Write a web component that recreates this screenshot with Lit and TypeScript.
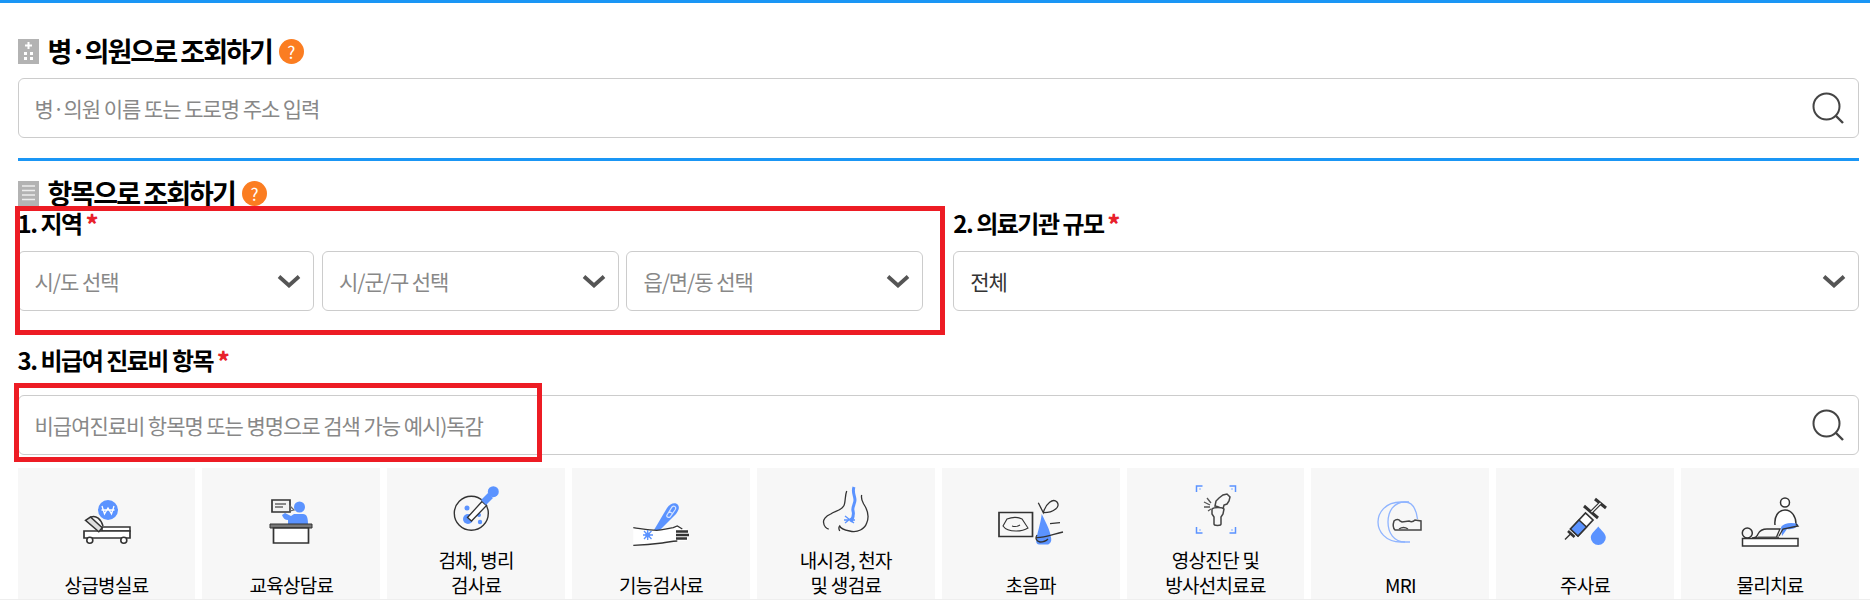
import { LitElement, html, css, svg } from "lit";
import { customElement } from "lit/decorators.js";

const BLUE = "#5b93ff";
const INK = "#333";

// all icons share a 64x64 box centred in the free part of the card
const ICONS = [
  svg`<circle cx="33" cy="21" r="10" fill="${BLUE}"/>
    <path d="M27 17l2.500 8 3.500-6 3.500 6 2.500-8M26.500 21h13" fill="none" stroke="#fff" stroke-width="1.300"/>
    <path d="M27 38h28v4H27z" fill="#fff" stroke="${INK}" stroke-width="1.500"/>
    <path d="M9 42h46v7H9z" fill="#fff" stroke="${INK}" stroke-width="1.700"/>
    <path d="M10.500 31.300l5-3.300 11.700 10.700-3.400 4z" fill="#ddd" stroke="${INK}" stroke-width="1.500"/>
    <path d="M16 28c5-2 10 2 12 9" fill="none" stroke="${INK}" stroke-width="1.500"/>
    <circle cx="14.800" cy="51.300" r="3" fill="#fff" stroke="${INK}" stroke-width="1.600"/>
    <circle cx="48.800" cy="51.300" r="3" fill="#fff" stroke="${INK}" stroke-width="1.600"/>`,
  svg`<path d="M13 11h18v12H13z" fill="#f2f2f2" stroke="${INK}" stroke-width="1.700"/>
    <path d="M31 17l4 4-4 1zM16 15h11M16 18h8" fill="none" stroke="#666" stroke-width="1.300"/>
    <circle cx="40.500" cy="18" r="5.500" fill="${BLUE}"/>
    <path d="M23 26l3-2 6 3 3-2h9c4 0 5 4 5 10H29v-4c-3 0-5-2-6-5z" fill="${BLUE}"/>
    <path d="M11 35h42v4H11z" fill="#777" stroke="${INK}" stroke-width="1"/>
    <path d="M14.500 39h35v15h-35z" fill="#fff" stroke="${INK}" stroke-width="1.700"/>`,
  svg`<circle cx="27.300" cy="37.300" r="17" fill="#f7f7f7" stroke="${INK}" stroke-width="1.400"/>
    <circle cx="24" cy="43" r="5" fill="${BLUE}"/><circle cx="23" cy="32" r="2.500" fill="${BLUE}"/>
    <circle cx="36" cy="46" r="2.200" fill="${BLUE}"/><circle cx="35" cy="39" r="2" fill="${BLUE}"/>
    <path d="M23.500 41.500l14.500-16 4.500 4-15 15.500z" fill="#fff" stroke="${INK}" stroke-width="1.300"/>
    <path d="M37 24l7-7 5 5-7 7z" fill="${BLUE}"/><circle cx="49.300" cy="15.700" r="5.500" fill="${BLUE}"/>`,
  svg`<path d="M25 41l13-22c3-5 9-6 11-3s0 6-2 9L31 41z" fill="${BLUE}"/>
    <path d="M38 26l5-8c2-2 5 0 3 3l-5 7c-1 1-4 0-3-2zM40 22l4 3" fill="none" stroke="#d5e3ff" stroke-width="1.200"/>
    <path d="M4.300 38.700c8 1 16 2.600 23.400 2.600 6 0 11-2 16.600-2.600l4-1.700 5 3h4c3 3 3 10 0 12h-9c-5 0-8 1-15 2-8 1-20 2-29 2.300z" fill="#fff"/>
    <path d="M4.300 38.700c8 1 16 2.600 23.400 2.600 6 0 11-2 16.600-2.600l4-1.700 5 3M4.300 56.300c9-.3 21-1.300 29-2.300 7-1 10-2 15-2" fill="none" stroke="${INK}" stroke-width="1.300"/>
    <path d="M47 42.500h12M47 46h13M47 49.500h11" stroke="${INK}" stroke-width="2.400"/>
    <path d="M15 42l7.500 8M22.500 42l-7.500 8M14 46h10M18.700 41v10" stroke="${BLUE}" stroke-width="1.300"/>
    <circle cx="18.700" cy="46" r="2.500" fill="${BLUE}"/>`,
  svg`<path d="M32.700 15c-2 5-1 12-3 15-3 5-9 5-13 8-5 2-8 6-7 9 0 3 3 6 5 6M47.700 19c-1 4 1 7 2 9 4 6 6 12 3 19-2 6-9 10-17 8-5-1-9-2-10-5-1 1-1 3 0 5" fill="none" stroke="${INK}" stroke-width="1.300"/>
    <path d="M40 11c-2 5 1 9 1 13s-3 7-2 11c1 3 0 7-2 11" fill="none" stroke="${BLUE}" stroke-width="3"/>
    <path d="M31 40l9 7M31 47l9-7M30 44h11" stroke="${BLUE}" stroke-width="1.300"/>`,
  svg`<path d="M0 23.500h33.500v24H0z" fill="#f7f7f7" stroke="${INK}" stroke-width="1.700"/>
    <path d="M8 30c5-2 11-2 15 0l6 9c-3 2-6 3-12 3s-11-2-13-5z" fill="none" stroke="${INK}" stroke-width="1.100"/>
    <path d="M13 37c3 1 5 1 8-1" fill="none" stroke="${INK}" stroke-width="1.100"/>
    <path d="M42.700 25c-1 10-5 20-5.500 27 0 2 1 3.500 3 3.500h9c2-1 3.500-3 3-6-1-9-6-17-9.500-24.500z" fill="${BLUE}"/>
    <path d="M39.300 13.700l5 10C47 14 54 9 58 13c4 5-4 11-13.700 10.700M51 34.700l10-1M37.700 48.700C44 49 52 46 64 43M38 46c-2 3-1 6 3 7 4 0 6-1 8-3" fill="none" stroke="${INK}" stroke-width="1.300"/>`,
  svg`<path d="M12.500 16v-6h6M45.500 10h6v6M12.500 51v6h6M45.500 57h6v-6" fill="none" stroke="${BLUE}" stroke-width="1.500"/>
    <path d="M15 13h2M49 13h-2M15 54h2M49 54h-2" stroke="#bcd2ff" stroke-width="2"/>
    <path d="M31 30l1-5 3-3 4-3 4-1 3 3-1 4-2 3-3 1-1 4c-3-1-5-3-8-3z" fill="#f7f7f7" stroke="#444" stroke-width="1.500"/>
    <path d="M28 33c2-2 10-2 12 0l-1 5-2 3v7c0 2-7 2-7 0v-7l-2-3z" fill="#f7f7f7" stroke="#444" stroke-width="1.500"/>
    <path d="M20 26l6 3M20 31l6 0M23 22l4 5M24 35l3-2" stroke="#555" stroke-width="1.300"/>`,
  svg`<path d="M41 13H33C17 13 10 24 10 33s7 20 23 20h9" fill="none" stroke="#8fb4ff" stroke-width="1.300"/>
    <path d="M37 13c-11 0-17 9-17 20s6 20 17 20M37 13c7 0 11 6 12.500 17" fill="none" stroke="#8fb4ff" stroke-width="1.300"/>
    <path d="M26 32c2-2 5-2 6 0l2 1 7-1c2 1 4 1 6-1l6 1v9H27c-2-2-2-6-1-9z" fill="#f7f7f7" stroke="#444" stroke-width="1.500"/>
    <path d="M31 40c3-2 6-2 9 0" fill="none" stroke="#444" stroke-width="1.300"/>`,
  svg`<path d="M12 50.500l6-6" stroke="${INK}" stroke-width="1.500"/>
    <path d="M17.500 40l15-16 7.500 7-15 16z" fill="#fff" stroke="${INK}" stroke-width="1.700"/>
    <path d="M17.500 40l8.500-9 7.500 7-8.500 9z" fill="${BLUE}" stroke="${INK}" stroke-width="1.500"/>
    <path d="M15 42l6.500 6" stroke="${INK}" stroke-width="2.600"/>
    <path d="M31 17l14 12M42 10l11 9" fill="none" stroke="${INK}" stroke-width="3"/>
    <path d="M38.500 23l9-9" fill="none" stroke="${INK}" stroke-width="3.500"/>
    <path d="M38.500 23l9-9" fill="none" stroke="#fff" stroke-width="1.200"/>
    <path d="M45.300 37.500c3 4 7.500 7 7.500 11a7.500 7.500 0 0 1-15 0c0-4 4.500-7 7.500-11z" fill="${BLUE}"/>`,
  svg`<circle cx="47" cy="13.500" r="4.500" fill="#fff" stroke="${INK}" stroke-width="1.500"/>
    <path d="M37 36c-1-8 3-15 10-15s11 7 11 14" fill="#fff" stroke="${INK}" stroke-width="1.500"/>
    <path d="M43 38c3-4 10-5 17-3 0 3-5 6-11 5l-5 7z" fill="${BLUE}"/>
    <path d="M58 35l2 2-15 3-4 7" fill="none" stroke="${INK}" stroke-width="1.300"/>
    <circle cx="9.300" cy="44" r="5" fill="#f7f7f7" stroke="${INK}" stroke-width="1.500"/>
    <path d="M14 49c3 0 5-1 6-4 2-4 5-5 9-5h13l-4 9z" fill="#f7f7f7" stroke="${INK}" stroke-width="1.300"/>
    <path d="M20 47.500h21v2H20z" fill="#555"/>
    <path d="M4.500 49.500h55.500v7.500H4.500z" fill="#fff" stroke="${INK}" stroke-width="1.500"/>`,
];

const ITEMS = [
  ["상급병실료"],
  ["교육상담료"],
  ["검체, 병리", "검사료"],
  ["기능검사료"],
  ["내시경, 천자", "및 생검료"],
  ["초음파"],
  ["영상진단 및", "방사선치료료"],
  ["MRI"],
  ["주사료"],
  ["물리치료"],
];

@customElement("app-root")
export class AppRoot extends LitElement {
  static styles = css`
    :host {
      display: block;
      height: 608px;
      overflow: hidden;
      background: #fff;
      font-family: "Noto Sans CJK KR", "Noto Sans", sans-serif;
      color: #000;
    }
    .page {
      height: 596px;
      overflow: hidden;
      border-top: 3px solid #1a96f5;
      padding: 0 11px 0 17.6px;
    }
    .title {
      display: flex;
      align-items: center;
      height: 34px;
      line-height: 34px;
      font-size: 27px;
      font-weight: 700;
      letter-spacing: -1.95px;
    }
    .title.first {
      margin-top: 31px;
    }
    .title.second {
      margin-top: 15px;
    }
    .title-icon {
      width: 21px;
      height: 25px;
      margin-right: 9px;
      flex: none;
    }
    .help {
      display: flex;
      align-items: center;
      justify-content: center;
      width: 25px;
      height: 25px;
      margin-left: 7px;
      border-radius: 50%;
      background: #fb7d21;
      color: #fff;
      font-size: 17px;
      line-height: 25px;
      font-weight: 400;
      letter-spacing: 0;
    }
    .box {
      display: flex;
      align-items: center;
      justify-content: space-between;
      box-sizing: border-box;
      height: 60px;
      padding: 0 14px 0 16px;
      border: 1px solid #ccc;
      border-radius: 6px;
      background: #fff;
      font-size: 21px;
      letter-spacing: -1.05px;
      color: #333;
    }
    .hint {
      color: #888;
    }
    .search {
      margin-top: 10px;
    }
    hr {
      height: 3px;
      margin: 20px 0 0;
      border: 0;
      background: #1a96f5;
    }
    .filters {
      display: grid;
      grid-template-columns: 1fr 1fr;
      gap: 30px;
    }
    .field {
      position: relative;
    }
    .label {
      height: 26px;
      line-height: 26px;
      margin-bottom: 15px;
      font-size: 24px;
      font-weight: 700;
      letter-spacing: -1.5px;
    }
    .label b {
      color: #e8212b;
    }
    .selects {
      display: grid;
      grid-template-columns: repeat(3, 1fr);
      gap: 7.5px;
    }
    .chevron {
      width: 24px;
      height: 14px;
      margin-right: -2px;
      flex: none;
    }
    .loupe {
      width: 32px;
      height: 32px;
      flex: none;
    }
    .mark {
      position: absolute;
      box-sizing: border-box;
      border: 5px solid #ed1c24;
      pointer-events: none;
    }
    .mark.area {
      left: -2.6px;
      top: -4px;
      width: 930px;
      height: 129px;
    }
    .items-field {
      margin-top: 36px;
    }
    .items-field .label {
      margin-bottom: 22px;
    }
    .mark.item {
      left: -3.6px;
      top: 36px;
      width: 528px;
      height: 79px;
    }
    .grid {
      display: grid;
      grid-template-columns: repeat(10, 1fr);
      gap: 7px;
      margin-top: 13px;
    }
    .card {
      display: flex;
      flex-direction: column;
      box-sizing: border-box;
      height: 140px;
      padding-bottom: 11px;
      background: #f7f7f7;
      font-size: 19px;
      line-height: 25px;
      letter-spacing: -0.7px;
      text-align: center;
    }
    .pic {
      flex: 1;
      display: flex;
      align-items: center;
      justify-content: center;
      padding-top: 1px;
    }
    .pic svg {
      width: 64px;
      height: 64px;
      overflow: visible;
    }
    .foot {
      height: 8px;
      border-top: 1px solid #eee;
      background: #fff;
    }
  `;

  private loupe() {
    return html`<svg class="loupe" viewBox="0 0 32 32" fill="none" stroke="#444" stroke-width="2">
      <circle cx="14.500" cy="14.500" r="13"/><path d="M24 24l7 7" stroke-width="2.400"/>
    </svg>`;
  }

  private select(text: string, hint = true) {
    return html`<div class="box">
      <span class=${hint ? "hint" : ""}>${text}</span>
      <svg class="chevron" viewBox="0 0 24 14" fill="none" stroke="#555" stroke-width="3.800">
        <path d="M2 2.500l10 9 10-9"/>
      </svg>
    </div>`;
  }

  render() {
    return html`
      <div class="page">
        <div class="title first">
          <svg class="title-icon" viewBox="0 0 21 25">
            <rect width="21" height="25" fill="#b3b3b3"/>
            <path d="M10.500 3v7M7 6.500h7" stroke="#fff" stroke-width="2"/>
            <path d="M6 13h3v3H6zM12 13h3v3h-3zM6 18h3v3H6zM12 18h3v3h-3z" fill="#fff"/>
          </svg>
          병·의원으로 조회하기
          <span class="help">?</span>
        </div>
        <div class="box search">
          <span class="hint">병·의원 이름 또는 도로명 주소 입력</span>
          ${this.loupe()}
        </div>
        <hr />
        <div class="title second">
          <svg class="title-icon" viewBox="0 0 21 25">
            <rect width="21" height="25" fill="#b3b3b3"/>
            <path d="M4 5h13M4 9.500h13M4 14h13M4 18.500h13" stroke="#eee" stroke-width="1.600"/>
          </svg>
          항목으로 조회하기
          <span class="help">?</span>
        </div>
        <div class="filters">
          <div class="field">
            <div class="label">1. 지역 <b>*</b></div>
            <div class="selects">
              ${this.select("시/도 선택")}
              ${this.select("시/군/구 선택")}
              ${this.select("읍/면/동 선택")}
            </div>
            <div class="mark area"></div>
          </div>
          <div class="field">
            <div class="label">2. 의료기관 규모 <b>*</b></div>
            ${this.select("전체", false)}
          </div>
        </div>
        <div class="field items-field">
          <div class="label">3. 비급여 진료비 항목 <b>*</b></div>
          <div class="box">
            <span class="hint">비급여진료비 항목명 또는 병명으로 검색 가능 예시)독감</span>
            ${this.loupe()}
          </div>
          <div class="mark item"></div>
        </div>
        <div class="grid">
          ${ITEMS.map(
            (lines, i) => html`<div class="card">
              <div class="pic"><svg viewBox="0 0 64 64">${ICONS[i]}</svg></div>
              ${lines.map((line) => html`<div>${line}</div>`)}
            </div>`
          )}
        </div>
      </div>
      <div class="foot"></div>
    `;
  }
}
